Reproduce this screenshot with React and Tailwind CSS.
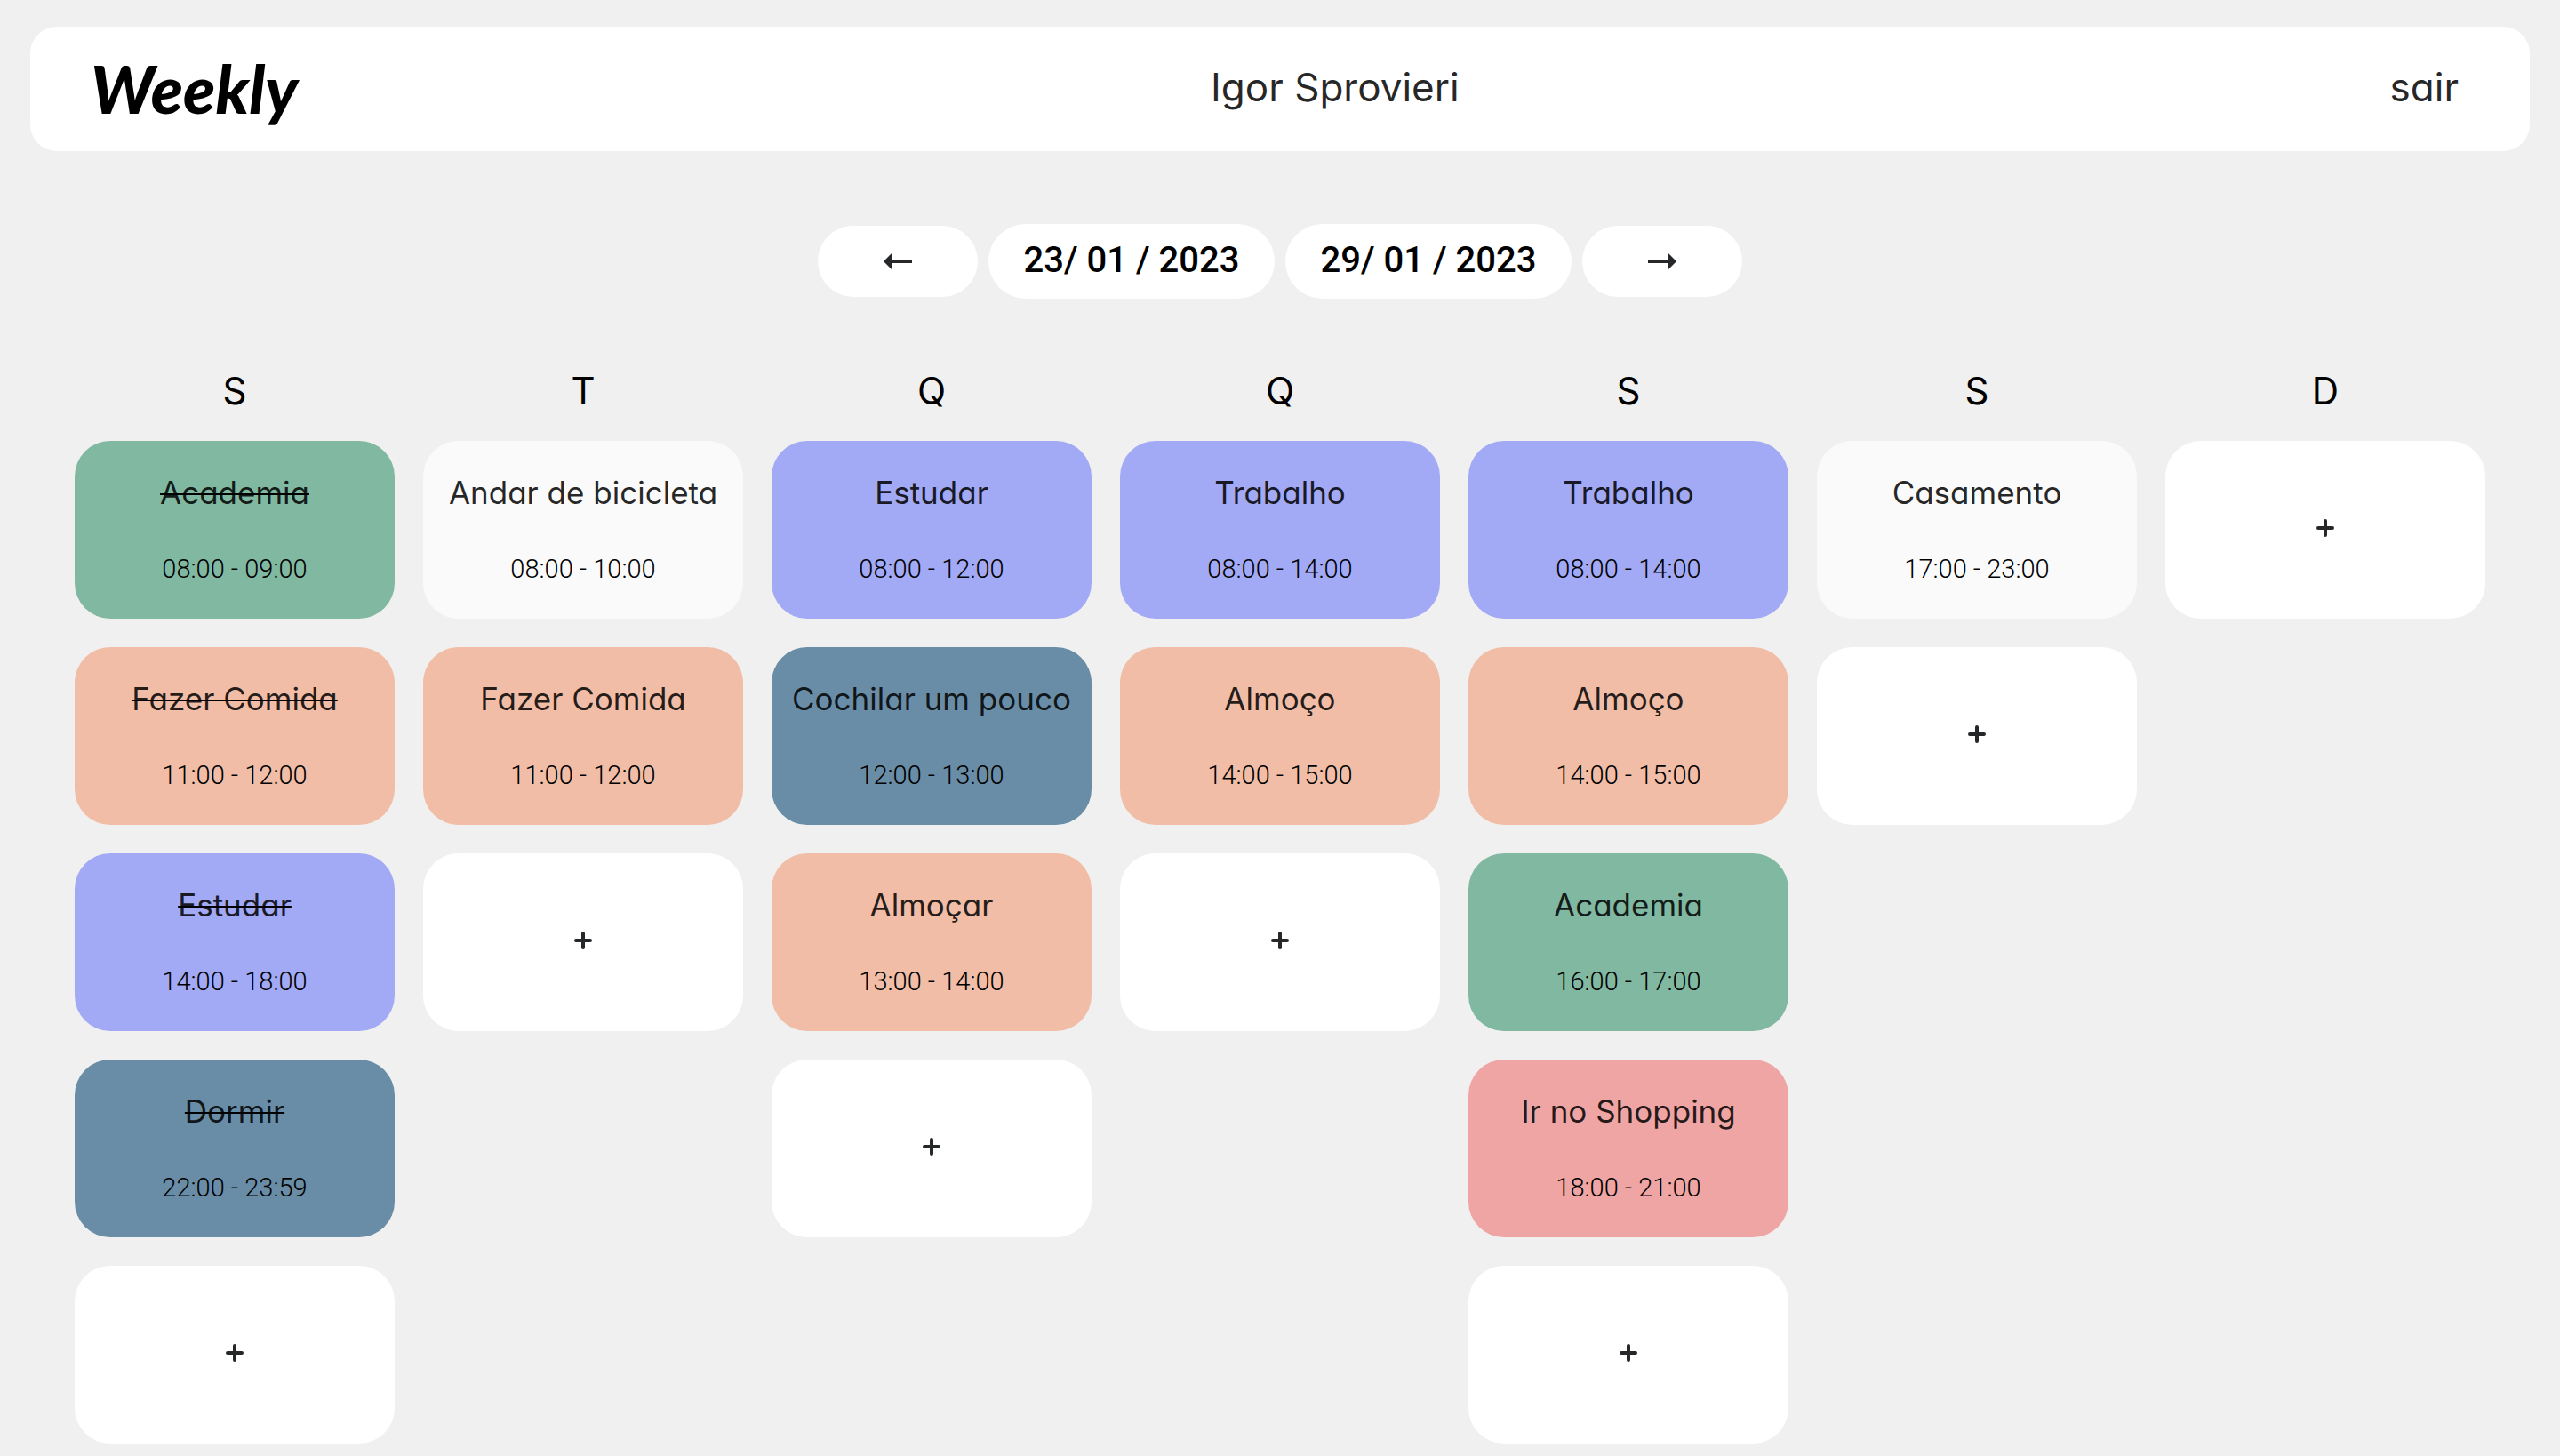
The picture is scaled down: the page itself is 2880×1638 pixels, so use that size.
const TONES = {
  green: 'bg-[#81b8a2]',
  peach: 'bg-[#f1bda7]',
  purple: 'bg-[#a2a9f5]',
  blue: 'bg-[#698da6]',
  pink: 'bg-[#efa5a3]',
  light: 'bg-[#fafafa]',
};

const WEEK = [
  {
    letter: 'S',
    name: 'segunda-feira',
    tasks: [
      { title: 'Academia', time: '08:00 - 09:00', tone: 'green', done: true },
      { title: 'Fazer Comida', time: '11:00 - 12:00', tone: 'peach', done: true },
      { title: 'Estudar', time: '14:00 - 18:00', tone: 'purple', done: true },
      { title: 'Dormir', time: '22:00 - 23:59', tone: 'blue', done: true },
    ],
  },
  {
    letter: 'T',
    name: 'terça-feira',
    tasks: [
      { title: 'Andar de bicicleta', time: '08:00 - 10:00', tone: 'light' },
      { title: 'Fazer Comida', time: '11:00 - 12:00', tone: 'peach' },
    ],
  },
  {
    letter: 'Q',
    name: 'quarta-feira',
    tasks: [
      { title: 'Estudar', time: '08:00 - 12:00', tone: 'purple' },
      { title: 'Cochilar um pouco', time: '12:00 - 13:00', tone: 'blue' },
      { title: 'Almoçar', time: '13:00 - 14:00', tone: 'peach' },
    ],
  },
  {
    letter: 'Q',
    name: 'quinta-feira',
    tasks: [
      { title: 'Trabalho', time: '08:00 - 14:00', tone: 'purple' },
      { title: 'Almoço', time: '14:00 - 15:00', tone: 'peach' },
    ],
  },
  {
    letter: 'S',
    name: 'sexta-feira',
    tasks: [
      { title: 'Trabalho', time: '08:00 - 14:00', tone: 'purple' },
      { title: 'Almoço', time: '14:00 - 15:00', tone: 'peach' },
      { title: 'Academia', time: '16:00 - 17:00', tone: 'green' },
      { title: 'Ir no Shopping', time: '18:00 - 21:00', tone: 'pink' },
    ],
  },
  {
    letter: 'S',
    name: 'sábado',
    tasks: [{ title: 'Casamento', time: '17:00 - 23:00', tone: 'light' }],
  },
  { letter: 'D', name: 'domingo', tasks: [] },
];

function Arrow({ className = '' }) {
  return (
    <svg viewBox="0 0 32 20" className={`h-5 w-8 ${className}`} fill="#262728" aria-hidden="true">
      <path d="M0 10 10 0V8H32v4H10v8Z" />
    </svg>
  );
}

function WeekButton({ label, flipped }) {
  return (
    <button
      type="button"
      aria-label={label}
      className="flex h-20 w-[180px] items-center justify-center rounded-[40px] bg-white"
    >
      <Arrow className={flipped ? 'rotate-180' : ''} />
    </button>
  );
}

function DateField({ label, value }) {
  return (
    <input
      type="text"
      aria-label={label}
      defaultValue={value}
      className="h-[84px] w-[322px] rounded-[42px] bg-white pb-1 text-center font-['Roboto',sans-serif] text-[40px] font-medium text-black outline-none"
    />
  );
}

function TaskCard({ title, time, tone, done }) {
  return (
    <li className={`flex min-h-[200px] flex-col items-center rounded-[40px] pt-[34px] ${TONES[tone]}`}>
      <h3
        className={`text-[35px] leading-[48px] whitespace-nowrap ${done ? 'line-through decoration-black decoration-2' : ''}`}
      >
        {title}
      </h3>
      <p className="mt-11 font-['Roboto',sans-serif] text-[29px] leading-[36px] font-light text-black">{time}</p>
    </li>
  );
}

function AddCard({ day }) {
  return (
    <li className="flex">
      <button
        type="button"
        aria-label={`Adicionar tarefa, ${day}`}
        className="flex min-h-[200px] flex-1 items-center justify-center rounded-[40px] bg-white pb-1"
      >
        <svg
          viewBox="0 0 20 20"
          className="size-5"
          stroke="#262728"
          strokeWidth="4"
          strokeLinecap="round"
          aria-hidden="true"
        >
          <path d="M10 2v16M2 10h16" />
        </svg>
      </button>
    </li>
  );
}

export default function App() {
  return (
    <div className="min-h-screen bg-[#f0f0f0] pt-[30px] pb-3 font-['Inter',sans-serif] text-black/85 [font-feature-settings:'cv11']">
      <header className="mx-[34px] flex min-h-[140px] items-center justify-between rounded-[30px] bg-white pr-20 pl-[68px]">
        <h1 className="font-['Lato',sans-serif] text-[74px] leading-[80px] font-black text-black italic">Weekly</h1>
        <p className="pb-1 text-[44px] leading-[52px]">Igor Sprovieri</p>
        <button type="button" className="pb-1 pl-5 text-[44px] leading-[52px]">
          sair
        </button>
      </header>

      <nav aria-label="Semana" className="mt-[82px] flex items-center justify-center gap-3">
        <WeekButton label="Semana anterior" />
        <DateField label="Início da semana" value="23/ 01 / 2023" />
        <DateField label="Fim da semana" value="29/ 01 / 2023" />
        <WeekButton label="Próxima semana" flipped />
      </nav>

      <main className="mx-[84px] mt-20 grid grid-cols-7 gap-8">
        {WEEK.map((day) => (
          <section key={day.name} aria-label={day.name}>
            <h2 className="text-center text-[42px] leading-[48px] text-black">{day.letter}</h2>
            <ul className="mt-8 flex flex-col gap-8">
              {day.tasks.map((task) => (
                <TaskCard key={task.title} {...task} />
              ))}
              <AddCard day={day.name} />
            </ul>
          </section>
        ))}
      </main>
    </div>
  );
}
